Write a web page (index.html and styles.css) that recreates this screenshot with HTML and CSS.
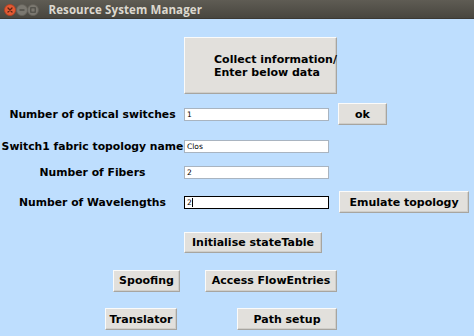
FILE: index.html
```html
<!DOCTYPE html>
<html>
<head>
<meta charset="utf-8">
<link rel="stylesheet" href="styles.css">
</head>
<body>
<div class="window">
  <div class="titlebar">
    <div class="controls">
      <svg class="ctl" width="12" height="12" viewBox="0 0 12 12">
        <circle cx="6" cy="6" r="5.5" fill="#e25b35" stroke="#b8401f" stroke-width="0.8"/>
        <path d="M4 4 L8 8 M8 4 L4 8" stroke="#5a2414" stroke-width="1.3" stroke-linecap="round"/>
      </svg>
      <svg class="ctl" width="12" height="12" viewBox="0 0 12 12">
        <circle cx="6" cy="6" r="5.5" fill="#7b7870" stroke="#65625b" stroke-width="0.8"/>
        <path d="M3.5 6 H8.5" stroke="#4a4842" stroke-width="1.3"/>
      </svg>
      <svg class="ctl" width="12" height="12" viewBox="0 0 12 12">
        <circle cx="6" cy="6" r="5.5" fill="#7b7870" stroke="#65625b" stroke-width="0.8"/>
        <rect x="3.8" y="3.8" width="4.4" height="4.4" fill="none" stroke="#4a4842" stroke-width="1.1"/>
      </svg>
    </div>
    <div class="title">Resource System Manager</div>
  </div>
  <div class="content">
    <button class="btn collect">Collect information/<br>Enter below data</button>

    <div class="label r2">Number of optical switches</div>
    <div class="entry r2">1</div>
    <button class="btn ok r2">ok</button>

    <div class="label r3">Switch1 fabric topology name</div>
    <div class="entry r3">Clos</div>

    <div class="label r4">Number of Fibers</div>
    <div class="entry r4">2</div>

    <div class="label r5">Number of Wavelengths</div>
    <div class="entry focus r5">2<span class="caret"></span></div>
    <button class="btn emulate r5">Emulate topology</button>

    <button class="btn init r6">Initialise stateTable</button>

    <button class="btn spoof r7">Spoofing</button>
    <button class="btn access r7">Access FlowEntries</button>

    <button class="btn trans r8">Translator</button>
    <button class="btn path r8">Path setup</button>
  </div>
</div>
</body>
</html>
```

FILE: styles.css
```css
html, body {
  margin: 0;
  padding: 0;
  width: 474px;
  height: 336px;
  overflow: hidden;
  background: #bedefe;
}

.window {
  width: 474px;
  height: 336px;
  display: flex;
  flex-direction: column;
}

.titlebar {
  height: 19px;
  flex: none;
  display: flex;
  align-items: center;
  background: linear-gradient(#5f5c54, #48463f);
  border-bottom: 1px solid #3b3934;
  box-sizing: border-box;
}

.controls {
  display: flex;
  padding-left: 4px;
  margin-top: 1px;
}

.ctl {
  margin-right: -0.5px;
}

.title {
  margin-left: 10px;
  font-family: "Open Sans", "DejaVu Sans", sans-serif;
  font-weight: bold;
  font-size: 11.5px;
  color: #dcd8cf;
  letter-spacing: 0.1px;
}

.content {
  flex: 1;
  display: grid;
  grid-template-columns: 184px 154px 136px;
  grid-template-rows: 57px 41px 22px 30px 30px 50px 27px 50px;
  padding-top: 18px;
  font-family: "DejaVu Sans", sans-serif;
}

.label {
  grid-column: 1;
  justify-self: center;
  align-self: center;
  font-weight: bold;
  font-size: 10.8px;
  color: #000;
  white-space: nowrap;
  padding-left: 1px;
}

.entry {
  grid-column: 2;
  justify-self: start;
  align-self: center;
  width: 145px;
  height: 13px;
  box-sizing: border-box;
  background: #fff;
  border: 1px solid #a9b4c0;
  font-size: 7.5px;
  line-height: 11px;
  padding-left: 2px;
  color: #000;
  display: flex;
  align-items: center;
}

.entry.focus {
  border-color: #000;
}

.caret {
  display: inline-block;
  width: 1px;
  height: 9px;
  background: #000;
}

.btn {
  font-family: "DejaVu Sans", sans-serif;
  font-weight: bold;
  font-size: 11px;
  color: #000;
  background: #e2e0dc;
  border: 1px solid;
  border-color: #fbfbfa #a7a5a0 #a7a5a0 #fbfbfa;
  box-shadow: inset -1px -1px 0 #d0cec9;
  padding: 0;
  margin: 0;
  height: 22px;
  align-self: center;
  white-space: nowrap;
}

.collect {
  grid-column: 2;
  grid-row: 1;
  justify-self: start;
  width: 153px;
  height: 57px;
  text-align: left;
  padding-left: 29px;
  line-height: 13px;
  padding-top: 1px;
}

.r2 { grid-row: 2; }
.r3 { grid-row: 3; }
.r4 { grid-row: 4; }
.r5 { grid-row: 5; }
.r6 { grid-row: 6; }
.r7 { grid-row: 7; }
.r8 { grid-row: 8; }

.ok {
  grid-column: 3;
  justify-self: start;
  width: 49px;
  margin-top: -1px;
}

.emulate {
  grid-column: 3;
  justify-self: start;
  margin-left: 1px;
  width: 130px;
}

.init {
  grid-column: 2;
  justify-self: start;
  width: 138px;
  height: 21px;
}

.spoof {
  grid-column: 1;
  justify-self: start;
  margin-left: 113px;
  width: 67px;
}

.access {
  grid-column: 2;
  justify-self: start;
  margin-left: 21px;
  width: 132px;
}

.trans {
  grid-column: 1;
  justify-self: start;
  margin-left: 105px;
  width: 72px;
}

.path {
  grid-column: 2;
  justify-self: start;
  margin-left: 53px;
  width: 100px;
}
```
